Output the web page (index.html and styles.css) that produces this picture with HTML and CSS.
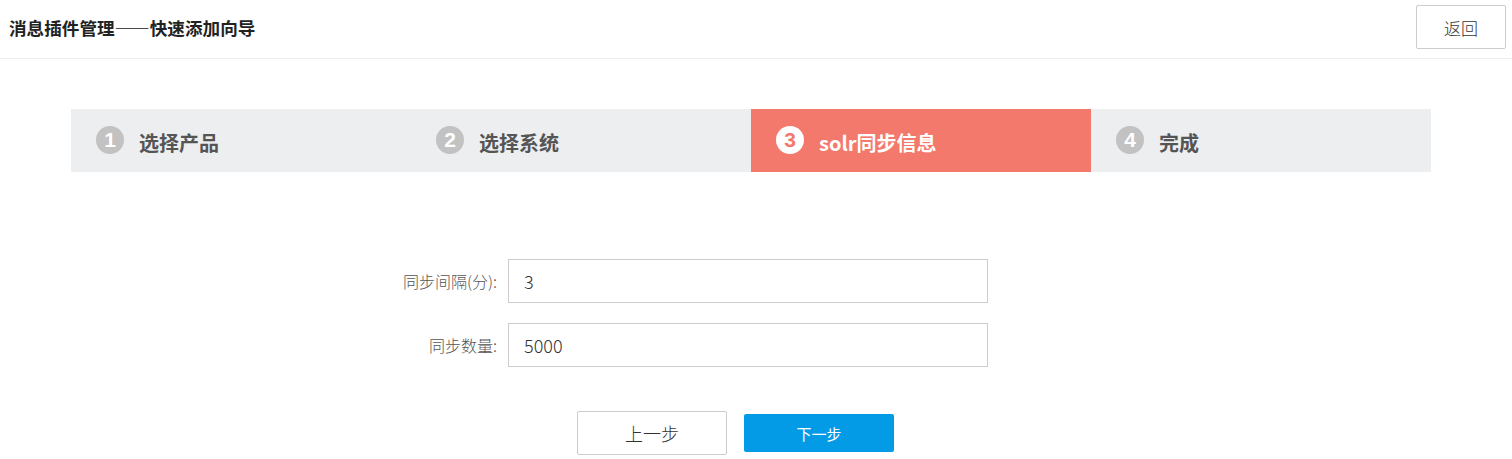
FILE: index.html
```html
<!DOCTYPE html>
<html lang="zh-CN">
<head>
<meta charset="utf-8">
<title>消息插件管理——快速添加向导</title>
<link rel="stylesheet" href="styles.css">
</head>
<body>
<div class="header">
  <div class="title">消息插件管理——快速添加向导</div>
  <button class="btn-back">返回</button>
</div>
<div class="steps">
  <div class="step"><span class="num">1</span><span class="label">选择产品</span></div>
  <div class="step"><span class="num">2</span><span class="label">选择系统</span></div>
  <div class="step active"><span class="num">3</span><span class="label">solr同步信息</span></div>
  <div class="step"><span class="num">4</span><span class="label">完成</span></div>
</div>
<div class="form">
  <div class="row">
    <label class="flabel">同步间隔(分):</label>
    <div class="input">3</div>
  </div>
  <div class="row">
    <label class="flabel">同步数量:</label>
    <div class="input">5000</div>
  </div>
</div>
<div class="actions">
  <button class="btn-prev">上一步</button>
  <button class="btn-next">下一步</button>
</div>
</body>
</html>
```

FILE: styles.css
```css
* { box-sizing: border-box; }
html, body { margin: 0; padding: 0; background: #fff; }
body {
  font-family: "Noto Sans CJK SC", "Noto Sans", sans-serif;
  color: #333;
}
.header {
  height: 59px;
  border-bottom: 1px solid #eeeeee;
  display: flex;
  align-items: flex-start;
  justify-content: space-between;
  padding: 0 6px 0 9px;
}
.title {
  font-size: 17.6px;
  font-weight: bold;
  color: #222;
  line-height: 22px;
  margin-top: 17px;
}
.btn-back {
  margin-top: 5px;
  width: 90px;
  height: 44px;
  background: #fff;
  border: 1px solid #cccccc;
  border-radius: 2px;
  font-family: "Noto Sans CJK SC", sans-serif;
  font-size: 17px;
  font-weight: 300;
  color: #333;
  padding: 0;
}
.steps {
  display: flex;
  margin: 50px 0 0 71px;
  width: 1360px;
  height: 63px;
  background: #edeef0;
}
.step {
  width: 340px;
  display: flex;
  align-items: center;
  padding-left: 25px;
}
.step .num {
  width: 28px;
  height: 28px;
  border-radius: 50%;
  background: #c2c2c2;
  color: #fff;
  font-family: "Liberation Sans", "DejaVu Sans", sans-serif;
  font-weight: bold;
  font-size: 21px;
  line-height: 1;
  display: flex;
  align-items: center;
  justify-content: center;
  margin-top: -2px;
}
.step .label {
  margin-left: 15px;
  font-size: 20px;
  font-weight: bold;
  color: #555;
  margin-top: 3px;
}
.step.active {
  background: #f4796d;
}
.step.active .num {
  background: #fff;
  color: #f4796d;
}
.step.active .label {
  color: #fff;
}
.form {
  margin-top: 87px;
  display: flex;
  flex-direction: column;
  gap: 20px;
}
.row {
  display: flex;
  align-items: center;
}
.flabel {
  width: 497px;
  text-align: right;
  font-size: 16px;
  font-weight: 300;
  color: #555;
}
.input {
  margin-left: 11px;
  width: 480px;
  height: 44px;
  border: 1px solid #cccccc;
  padding-left: 15px;
  font-size: 18px;
  font-weight: 300;
  line-height: 42px;
  color: #333;
}
.actions {
  margin-top: 44px;
  display: flex;
  align-items: center;
  padding-left: 577px;
  gap: 17px;
}
.btn-prev {
  width: 150px;
  height: 44px;
  background: #fff;
  border: 1px solid #cccccc;
  border-radius: 2px;
  font-family: "Noto Sans CJK SC", sans-serif;
  font-size: 18px;
  font-weight: 300;
  color: #333;
  padding: 0;
}
.btn-next {
  width: 150px;
  height: 38px;
  background: #039be5;
  border: none;
  border-radius: 2px;
  font-family: "Noto Sans CJK SC", sans-serif;
  font-size: 15px;
  color: #fff;
  padding: 0;
}
```
